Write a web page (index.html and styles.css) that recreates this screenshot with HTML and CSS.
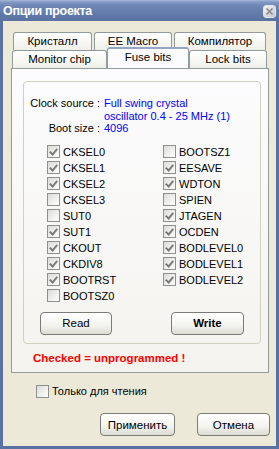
FILE: index.html
```html
<!DOCTYPE html>
<html lang="ru">

<head>
    <meta charset="UTF-8">
    <meta name="viewport" content="width=device-width, initial-scale=1.0">
    <title>Опции проекта</title>
    <link rel="stylesheet" href="styles.css">
</head>

<body>
    <div class="window">
        <div class="titlebar">
            <span class="title">Опции проекта</span>
            <span class="close">
                <svg width="11" height="11" viewBox="0 0 11 11">
                    <path d="M2.5 2.5 L8.5 8.5 M8.5 2.5 L2.5 8.5" stroke="#8a8a8a" stroke-width="1.6" />
                </svg>
            </span>
        </div>

        <div class="client">
            <!-- Tabs, two rows -->
            <div class="tabs">
                <div class="tab-row back">
                    <div class="tab w-krist">Кристалл</div>
                    <div class="tab w-ee">EE Macro</div>
                    <div class="tab w-comp">Компилятор</div>
                </div>
                <div class="tab-row front">
                    <div class="tab w-mon">Monitor chip</div>
                    <div class="tab active w-fuse">Fuse bits</div>
                    <div class="tab w-lock">Lock bits</div>
                </div>
            </div>

            <div class="panel">
                <div class="group">
                    <div class="info">
                        <span class="key">Clock source :</span>
                        <span class="value">Full swing crystal<br>oscillator 0.4 - 25 MHz (1)</span>
                        <span class="key">Boot size :</span>
                        <span class="value">4096</span>
                    </div>

                    <div class="fuses">
                        <div class="fuse-col">
                            <label class="check"><span class="box on"></span>CKSEL0</label>
                            <label class="check"><span class="box on"></span>CKSEL1</label>
                            <label class="check"><span class="box on"></span>CKSEL2</label>
                            <label class="check"><span class="box"></span>CKSEL3</label>
                            <label class="check"><span class="box"></span>SUT0</label>
                            <label class="check"><span class="box on"></span>SUT1</label>
                            <label class="check"><span class="box on"></span>CKOUT</label>
                            <label class="check"><span class="box on"></span>CKDIV8</label>
                            <label class="check"><span class="box on"></span>BOOTRST</label>
                            <label class="check"><span class="box"></span>BOOTSZ0</label>
                        </div>
                        <div class="fuse-col">
                            <label class="check"><span class="box"></span>BOOTSZ1</label>
                            <label class="check"><span class="box on"></span>EESAVE</label>
                            <label class="check"><span class="box on"></span>WDTON</label>
                            <label class="check"><span class="box"></span>SPIEN</label>
                            <label class="check"><span class="box on"></span>JTAGEN</label>
                            <label class="check"><span class="box on"></span>OCDEN</label>
                            <label class="check"><span class="box on"></span>BODLEVEL0</label>
                            <label class="check"><span class="box on"></span>BODLEVEL1</label>
                            <label class="check"><span class="box on"></span>BODLEVEL2</label>
                        </div>
                    </div>

                    <div class="actions">
                        <button class="btn w-read">Read</button>
                        <button class="btn w-write bold">Write</button>
                    </div>
                </div>

                <div class="note">Checked = unprogrammed !</div>
            </div>

            <label class="check readonly"><span class="box"></span>Только для чтения</label>

            <div class="footer">
                <button class="btn w-apply">Применить</button>
                <button class="btn w-cancel">Отмена</button>
            </div>
        </div>
    </div>
</body>

</html>
```

FILE: styles.css
```css
body {
    margin: 0;
    padding: 0;
    background: #ece9d8;
    font-family: "Liberation Sans", Arial, sans-serif;
    font-size: 11px;
    color: #000000;
}

.window {
    width: 279px;
    height: 449px;
    display: flex;
    flex-direction: column;
    box-sizing: border-box;
    background: #5a72a2;
}

/* Title bar */

.titlebar {
    height: 21px;
    flex: none;
    display: flex;
    align-items: center;
    justify-content: space-between;
    padding: 0 3px 0 3px;
    background: linear-gradient(#a9b9d8 0px, #8299c4 2px, #6f86b4 6px, #627aaa 14px, #5a72a2 21px);
}

.title {
    color: #ffffff;
    font-weight: bold;
    font-size: 12.5px;
    letter-spacing: -0.3px;
    margin-top: 1px;
}

.close {
    width: 13px;
    height: 13px;
    box-sizing: border-box;
    border: 1px solid #e4e6ec;
    border-radius: 3px;
    background: linear-gradient(135deg, #f2f2f2, #c4c6cc);
    display: flex;
    margin-top: 1px;
}

.client {
    flex: 1;
    margin: 0 3px 3px 3px;
    background: #ece9d8;
    display: flex;
    flex-direction: column;
}

/* Tabs */

.tabs {
    padding-top: 11px;
}

.tab-row {
    display: flex;
}

.tab-row.back {
    padding-left: 10px;
    gap: 2px;
}

.tab-row.front {
    padding-left: 9px;
    margin-top: -1px;
}

.tab {
    height: 18px;
    box-sizing: border-box;
    border: 1px solid #919b9c;
    border-bottom: none;
    border-radius: 3px 3px 0 0;
    background: linear-gradient(#ffffff, #f0f0ea);
    display: flex;
    align-items: center;
    justify-content: center;
    font-size: 11.5px;
    padding-bottom: 1px;
}

.front .tab {
    margin-top: 1px;
}

.tab.active {
    height: 21px;
    margin-top: -2px;
    background: #fcfcfe;
    border-top: 2px solid #93a6c8;
    position: relative;
    z-index: 1;
    margin-bottom: -1px;
    padding-bottom: 3px;
}

.w-krist { width: 79px; }
.w-ee { width: 78px; }
.w-comp { width: 92px; }
.w-mon { width: 95px; }
.w-fuse { width: 82px; }
.w-lock { width: 78px; }

/* Tab body */

.panel {
    margin: 0 7px 0 8px;
    height: 305px;
    box-sizing: border-box;
    border: 1px solid #919b9c;
    background: linear-gradient(#fcfcfe, #f4f3ee);
    padding: 12px 7px 0 11px;
}

.group {
    height: 263px;
    box-sizing: border-box;
    border: 1px solid #d0d0bf;
    border-radius: 4px;
    padding: 15px 0 0 0;
}

.info {
    display: grid;
    grid-template-columns: 76px auto;
    column-gap: 4px;
    line-height: 12.5px;
}

.info .key {
    text-align: right;
    white-space: nowrap;
}

.info .value {
    color: #0000ff;
}

.fuses {
    display: flex;
    padding-left: 23px;
    margin-top: 9px;
}

.fuse-col {
    width: 116px;
    flex: none;
    display: flex;
    flex-direction: column;
}

.fuse-col + .fuse-col {
    width: auto;
}

.check {
    display: flex;
    align-items: center;
    height: 16px;
    font-size: 11px;
}

.box {
    width: 13px;
    height: 13px;
    flex: none;
    box-sizing: border-box;
    border: 1px solid #8e8f8f;
    background: linear-gradient(135deg, #dcdcd7, #ffffff);
    margin-right: 3px;
    position: relative;
}

.box.on::after {
    content: "";
    position: absolute;
    left: 3px;
    top: 1px;
    width: 3px;
    height: 6px;
    border: solid #7c7c7c;
    border-width: 0 2px 2px 0;
    transform: rotate(40deg);
}

.actions {
    display: flex;
    justify-content: space-between;
    padding: 0 16px 0 16px;
    margin-top: 8px;
}

.btn {
    height: 23px;
    box-sizing: border-box;
    border: 1px solid #7b7b78;
    border-radius: 4px;
    background: linear-gradient(#ffffff, #f3f3ef 60%, #dcdcd4);
    font-family: "Liberation Sans", Arial, sans-serif;
    font-size: 11.5px;
    font-weight: normal;
    color: #000000;
    padding: 0;
}

.btn.bold {
    font-weight: bold;
}

.w-read { width: 72px; }
.w-write { width: 73px; }
.w-apply { width: 75px; }
.w-cancel { width: 73px; }

.note {
    color: #ff0000;
    font-weight: bold;
    font-size: 11.5px;
    margin-top: 8px;
    padding-left: 10px;
}

.readonly {
    margin: 10px 0 0 33px;
}

.footer {
    display: flex;
    justify-content: flex-end;
    gap: 22px;
    padding-right: 6px;
    margin-top: 14px;
}
```
